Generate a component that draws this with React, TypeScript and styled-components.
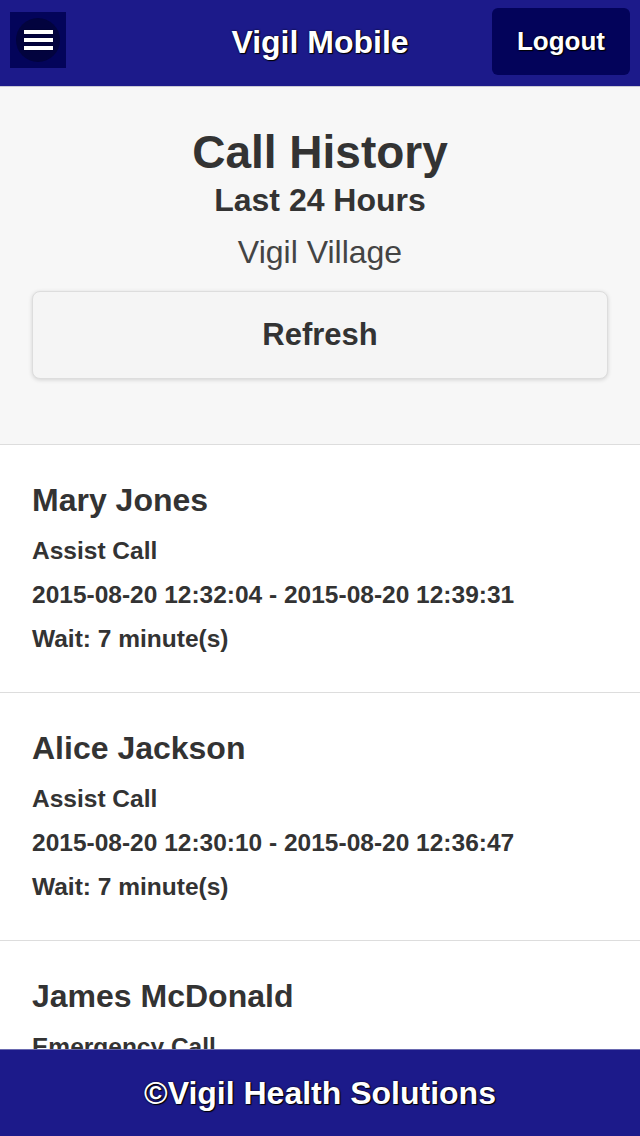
import React from 'react'
import styled, { createGlobalStyle } from 'styled-components'

const GlobalStyle = createGlobalStyle`
  html, body {
    margin: 0;
    padding: 0;
    background: #fff;
    font-family: "Liberation Sans", Arial, sans-serif;
  }
`

const Page = styled.div`
  display: flex;
  flex-direction: column;
  height: 100vh;
  overflow: hidden;
`

const Header = styled.header`
  display: grid;
  grid-template-columns: 1fr auto 1fr;
  align-items: start;
  height: 86px;
  padding: 0 10px;
  background: #1c1a8a;
  border-bottom: 1px solid #c9c9d6;
  flex-shrink: 0;
`

const MenuButton = styled.button`
  justify-self: start;
  display: flex;
  align-items: center;
  justify-content: center;
  width: 56px;
  height: 56px;
  margin-top: 12px;
  padding: 0;
  border: 0;
  background: #03045a;
`

const MenuDisc = styled.span`
  display: flex;
  flex-direction: column;
  align-items: center;
  justify-content: center;
  gap: 4px;
  width: 44px;
  height: 44px;
  border-radius: 50%;
  background: #02033e;
`

const Bar = styled.span`
  display: block;
  width: 29px;
  height: 4px;
  background: #fff;
  box-shadow: 0 0 1px #000;
`

const HeaderTitle = styled.h1`
  margin: 0;
  line-height: 84px;
  color: #fff;
  font-size: 32px;
  font-weight: bold;
  text-shadow: 0 0 2px #000, 1px 1px 1px #000;
`

const LogoutButton = styled.button`
  justify-self: end;
  width: 138px;
  height: 67px;
  margin-top: 8px;
  border: 0;
  border-radius: 6px;
  background: #03035a;
  color: #fff;
  font-family: inherit;
  font-size: 26px;
  font-weight: bold;
  text-shadow: 0 0 2px #000, 1px 1px 1px #000;
`

const Main = styled.main`
  flex: 1;
  overflow: hidden;
`

const Summary = styled.section`
  display: flex;
  flex-direction: column;
  align-items: center;
  padding: 37px 32px 65px;
  background: #f7f7f7;
  border-bottom: 1px solid #ddd;
  color: #333;
`

const Title = styled.h2`
  margin: 0;
  font-size: 46px;
  line-height: 56px;
  font-weight: bold;
`

const Subtitle = styled.h3`
  margin: 0;
  font-size: 32px;
  line-height: 40px;
  font-weight: bold;
`

const Facility = styled.div`
  margin-top: 12px;
  font-size: 32px;
  line-height: 40px;
  color: #444;
`

const RefreshButton = styled.button`
  width: 100%;
  height: 88px;
  margin-top: 19px;
  border: 1px solid #ddd;
  border-radius: 8px;
  background: #f5f5f5;
  box-shadow: 0 1px 4px rgba(0, 0, 0, 0.15);
  color: #333;
  font-family: inherit;
  font-size: 31px;
  font-weight: bold;
`

const CallList = styled.ul`
  list-style: none;
  margin: 0;
  padding: 0;
`

const CallItem = styled.li`
  padding: 33px 32px 38px;
  border-bottom: 1px solid #ddd;
  background: #fff;
  color: #333;
`

const Name = styled.h4`
  margin: 0;
  font-size: 32px;
  line-height: 44px;
  font-weight: bold;
`

const Detail = styled.p`
  margin: 14px 0 0;
  font-size: 24.5px;
  line-height: 30px;
  font-weight: bold;
`

const Footer = styled.footer`
  display: flex;
  align-items: center;
  justify-content: center;
  height: 86px;
  background: #1c1a8a;
  border-top: 1px solid #6a6ab0;
  flex-shrink: 0;
  color: #fff;
  font-size: 32px;
  line-height: 40px;
  font-weight: bold;
  text-shadow: 0 0 2px #000, 1px 1px 1px #000;
`

interface Call {
  name: string
  type: string
  start: string
  end: string
  wait: number
}

const calls: Array<Call> = [
  { name: 'Mary Jones', type: 'Assist Call', start: '2015-08-20 12:32:04', end: '2015-08-20 12:39:31', wait: 7 },
  { name: 'Alice Jackson', type: 'Assist Call', start: '2015-08-20 12:30:10', end: '2015-08-20 12:36:47', wait: 7 },
  { name: 'James McDonald', type: 'Emergency Call', start: '2015-08-20 12:21:40', end: '2015-08-20 12:25:02', wait: 4 }
]

const App = () => (
  <Page>
    <GlobalStyle />
    <Header>
      <MenuButton aria-label="Menu">
        <MenuDisc>
          <Bar />
          <Bar />
          <Bar />
        </MenuDisc>
      </MenuButton>
      <HeaderTitle>Vigil Mobile</HeaderTitle>
      <LogoutButton>Logout</LogoutButton>
    </Header>
    <Main>
      <Summary>
        <Title>Call History</Title>
        <Subtitle>Last 24 Hours</Subtitle>
        <Facility>Vigil Village</Facility>
        <RefreshButton>Refresh</RefreshButton>
      </Summary>
      <CallList>
        {calls.map((call, i) => (
          <CallItem key={i}>
            <Name>{call.name}</Name>
            <Detail>{call.type}</Detail>
            <Detail>
              {call.start} - {call.end}
            </Detail>
            <Detail>Wait: {call.wait} minute(s)</Detail>
          </CallItem>
        ))}
      </CallList>
    </Main>
    <Footer>©Vigil Health Solutions</Footer>
  </Page>
)

export default App
